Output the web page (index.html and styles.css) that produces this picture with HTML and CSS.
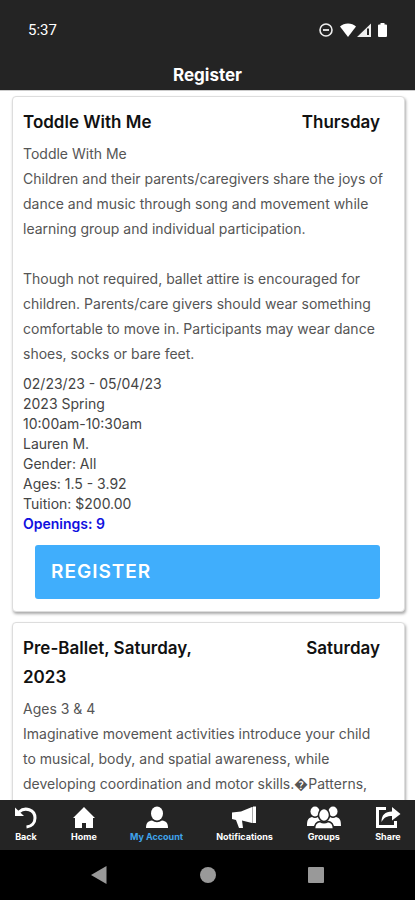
FILE: index.html
```
<!DOCTYPE html>
<html lang="en">
<head>
<meta charset="utf-8">
<meta name="viewport" content="width=device-width, initial-scale=1">
<title>Register</title>
<link rel="stylesheet" href="styles.css">
</head>
<body>
<header class="top">
  <div class="status">
    <span class="clock">5:37</span>
    <svg class="status-icons" width="70" height="18" viewBox="0 0 70 18" aria-hidden="true">
      <circle cx="8" cy="9" r="6" fill="none" stroke="#eee" stroke-width="1.6"/>
      <path d="M5 9h6" stroke="#eee" stroke-width="1.8"/>
      <path d="M22 5.500C26 1.500 34 1.500 38 5.500L30 16Z" fill="#fff"/>
      <path d="M39 16L53 2.500V16ZM49 7.500V14H51V7.500Z" fill="#eee" fill-rule="evenodd"/>
      <path d="M60 4.500a1 1 0 0 1 1-1h1.500V2h4v1.500H68a1 1 0 0 1 1 1V15a1 1 0 0 1-1 1h-7a1 1 0 0 1-1-1Z" fill="#fff"/>
    </svg>
  </div>
  <h1 class="title">Register</h1>
</header>

<main class="list">
  <article class="card">
    <div class="card-head">
      <h2 class="name">Toddle With Me</h2>
      <span class="day">Thursday</span>
    </div>
    <div class="description">
      <p>Toddle With Me</p>
      <p>Children and their parents/caregivers share the joys of dance and music through song and movement while learning group and individual participation.</p>
      <p class="spaced">Though not required, ballet attire is encouraged for children. Parents/care givers should wear something comfortable to move in. Participants may wear dance shoes, socks or bare feet.</p>
    </div>
    <ul class="details">
      <li>02/23/23 - 05/04/23</li>
      <li>2023 Spring</li>
      <li>10:00am-10:30am</li>
      <li>Lauren M.</li>
      <li>Gender: All</li>
      <li>Ages: 1.5 - 3.92</li>
      <li>Tuition: $200.00</li>
      <li class="openings">Openings: 9</li>
    </ul>
    <button class="register" type="button">REGISTER</button>
  </article>

  <article class="card">
    <div class="card-head">
      <h2 class="name">Pre-Ballet, Saturday, 2023</h2>
      <span class="day">Saturday</span>
    </div>
    <div class="description">
      <p>Ages 3 &amp; 4</p>
      <p>Imaginative movement activities introduce your child to musical, body, and spatial awareness, while developing coordination and motor skills.&#xFFFD;Patterns,</p>
    </div>
  </article>
</main>

<nav class="tabs">
  <a class="tab" href="#back">
    <svg width="24" height="24" viewBox="0 0 24 24" aria-hidden="true">
      <path d="M5 6C11 0.500 21 3.500 21 12C21 17 17.500 20.500 12.500 21" fill="none" stroke="#fff" stroke-width="3"/>
      <path d="M1 1.500V10H10Z" fill="#fff"/>
    </svg>
    <span>Back</span>
  </a>
  <a class="tab" href="#home">
    <svg width="24" height="24" viewBox="0 0 24 24" aria-hidden="true">
      <path d="M12 1L23 12H21V22H14V17H10V22H3V12H1Z" fill="#fff"/>
    </svg>
    <span>Home</span>
  </a>
  <a class="tab active" href="#account">
    <svg width="24" height="24" viewBox="0 0 24 24" aria-hidden="true">
      <ellipse cx="12" cy="7.500" rx="6" ry="7" fill="#fff"/>
      <path d="M1 22C1 17 3 15 7 14.500Q12 18 17 14.500C21 15 23 17 23 22Z" fill="#fff"/>
    </svg>
    <span>My Account</span>
  </a>
  <a class="tab" href="#notifications">
    <svg width="26" height="24" viewBox="0 0 26 24" aria-hidden="true">
      <path d="M1 6.500L10 5.500L21 1V17L11 14.500L12 22H8L5 14L1 13Z" fill="#fff"/>
      <path d="M22 0.500H25V17H22Z" fill="#fff"/>
      <path d="M21.500 1V17" stroke="#aaa" stroke-width="1"/>
    </svg>
    <span>Notifications</span>
  </a>
  <a class="tab" href="#groups">
    <svg width="36" height="24" viewBox="0 0 36 24" aria-hidden="true">
      <g fill="#fff">
        <ellipse cx="9" cy="5.500" rx="4.500" ry="5"/>
        <ellipse cx="27" cy="5.500" rx="4.500" ry="5"/>
        <path d="M1 20C1 14 2 12 6 11Q9 13 12 11L16 14V20ZM35 20C35 14 34 12 30 11Q27 13 24 11L20 14V20Z"/>
      </g>
      <g fill="#fff" stroke="#242424" stroke-width="1.500">
        <ellipse cx="18" cy="9" rx="5.500" ry="6.500"/>
        <path d="M8.500 23C8.500 18 10.500 16 14 15.500Q18 18 22 15.500C25.500 16 27.500 18 27.500 23Z"/>
      </g>
    </svg>
    <span>Groups</span>
  </a>
  <a class="tab" href="#share">
    <svg width="26" height="24" viewBox="0 0 26 24" aria-hidden="true">
      <path d="M11 2.500H2.500V20.500H20.500V15" fill="none" stroke="#fff" stroke-width="3"/>
      <path d="M6.500 16C6.500 9 10 5.500 17 5.500V1L25.500 8L17 14.500V10C12 10 9 11.500 6.500 16Z" fill="#fff"/>
    </svg>
    <span>Share</span>
  </a>
</nav>

<footer class="system">
  <svg width="18" height="20" viewBox="0 0 18 20" aria-hidden="true"><path d="M1 10L16.500 1V19Z" fill="#999"/></svg>
  <svg width="18" height="20" viewBox="0 0 18 20" aria-hidden="true"><circle cx="9" cy="10" r="8" fill="#999"/></svg>
  <svg width="18" height="20" viewBox="0 0 18 20" aria-hidden="true"><rect x="1" y="2" width="16" height="16" rx="1" fill="#999"/></svg>
</footer>
</body>
</html>
```
FILE: styles.css
```
* {
  box-sizing: border-box;
}

body,
h1,
h2,
p,
ul {
  margin: 0;
  padding: 0;
}

body {
  display: flex;
  flex-direction: column;
  height: 100vh;
  background: #fff;
  font-family: Inter, "Liberation Sans", sans-serif;
}

.top {
  background: #242424;
  color: #fff;
}

.status {
  display: flex;
  align-items: center;
  justify-content: space-between;
  height: 60px;
  padding: 0 27px 0 28px;
}

.clock {
  font: 400 15px/20px Roboto, sans-serif;
}

.title {
  font-size: 17px;
  line-height: 30px;
  font-weight: 700;
  text-align: center;
}

.list {
  display: flex;
  flex: 1;
  flex-direction: column;
  gap: 10px;
  min-height: 0;
  padding: 5px 10px 0 12px;
  overflow: hidden;
  border-top: 1px solid #ccc;
}

.card {
  flex: none;
  padding: 11px 12px 12px 10px;
  border: 1px solid #ddd;
  border-radius: 4px;
  background: #fff;
  box-shadow: 1px 2px 3px #aaa;
}

.card-head {
  display: flex;
  align-items: flex-start;
  justify-content: space-between;
  padding-right: 12px;
  color: #111;
  font-size: 17px;
  line-height: 29px;
  font-weight: 600;
}

.name {
  max-width: 60%;
  font-size: inherit;
  font-weight: inherit;
}

.description {
  margin-top: 4px;
  padding-right: 7px;
  color: #555;
  font-size: 14px;
  line-height: 25px;
}

.spaced {
  margin-top: 25px;
}

.details {
  margin-top: 8px;
  color: #444;
  font-size: 14px;
  line-height: 20px;
  list-style: none;
}

.openings {
  color: #1010e0;
  font-weight: 600;
}

.register {
  display: block;
  width: calc(100% - 24px);
  height: 54px;
  margin: 11px 12px 0;
  padding: 0 16px;
  border: 0;
  border-radius: 3px;
  background: #40aefc;
  color: #fff;
  font: 600 19px/24px Inter, sans-serif;
  letter-spacing: 1px;
  text-align: left;
}

.tabs {
  display: flex;
  align-items: center;
  justify-content: space-between;
  height: 50px;
  padding: 0 14px;
  background: #242424;
}

.tab {
  display: flex;
  flex-direction: column;
  align-items: center;
  color: #fff;
  font-size: 9px;
  line-height: 14px;
  font-weight: 700;
  text-decoration: none;
}

.active {
  color: #40a4ec;
}

.system {
  display: flex;
  align-items: center;
  justify-content: space-between;
  height: 50px;
  padding: 0 90px;
  background: #000;
}
```
